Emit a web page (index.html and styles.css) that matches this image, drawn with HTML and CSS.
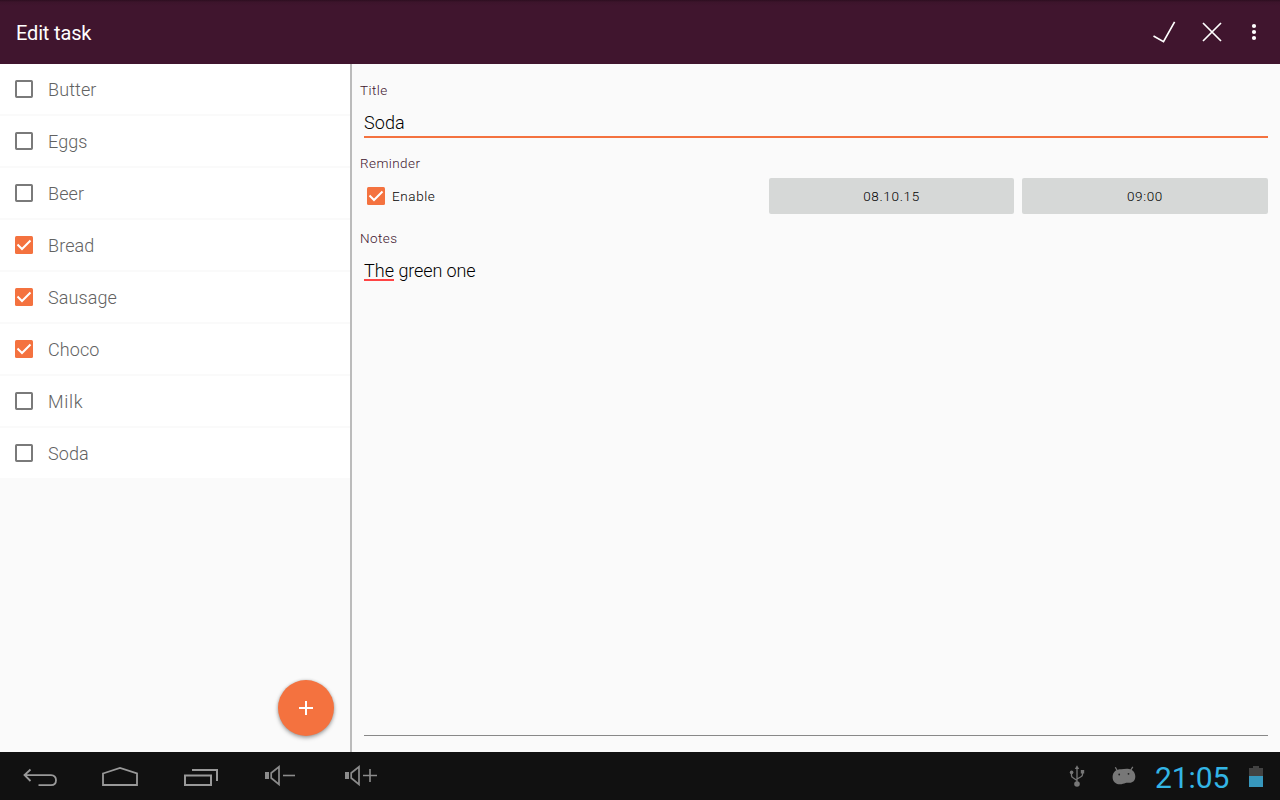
FILE: index.html
```html
<!DOCTYPE html>
<html lang="en">
<head>
<meta charset="utf-8">
<title>Edit task</title>
<link rel="stylesheet" href="styles.css">
</head>
<body>
<svg class="defs" aria-hidden="true">
  <symbol id="box-off" viewBox="0 0 20 20"><rect x="2" y="2" width="16" height="16" rx=".7" fill="none" stroke="#7a7a7a" stroke-width="2"/></symbol>
  <symbol id="box-on" viewBox="0 0 20 20"><rect x="1" y="1" width="18" height="18" rx="1.5" fill="#f4723f"/><path d="M3.5 9.5L8 14 16.5 5.5" fill="none" stroke="#fff" stroke-width="2"/></symbol>
</svg>
<div class="screen">
  <header class="bar">
    <h1 class="bar-title">Edit task</h1>
    <div class="actions">
      <svg class="act act-done" viewBox="0 0 24 24"><path d="M1.5 16L11.5 21.7 22.6 1.8" fill="none" stroke="#fff" stroke-width="1.7"/></svg>
      <svg class="act act-close" viewBox="0 0 24 24"><path d="M3 3L21 21M21 3L3 21" fill="none" stroke="#fff" stroke-width="1.7"/></svg>
      <svg class="act act-more" viewBox="0 0 24 24"><g fill="#fff"><circle cx="12" cy="6" r="2.1"/><circle cx="12" cy="12" r="2.1"/><circle cx="12" cy="18" r="2.1"/></g></svg>
    </div>
  </header>
  <main class="content">
    <section class="list">
      <ul class="tasks">
        <li class="task"><svg class="box"><use href="#box-off"/></svg><span>Butter</span></li>
        <li class="task"><svg class="box"><use href="#box-off"/></svg><span>Eggs</span></li>
        <li class="task"><svg class="box"><use href="#box-off"/></svg><span>Beer</span></li>
        <li class="task"><svg class="box"><use href="#box-on"/></svg><span>Bread</span></li>
        <li class="task"><svg class="box"><use href="#box-on"/></svg><span>Sausage</span></li>
        <li class="task"><svg class="box"><use href="#box-on"/></svg><span>Choco</span></li>
        <li class="task"><svg class="box"><use href="#box-off"/></svg><span class="wide">Milk</span></li>
        <li class="task"><svg class="box"><use href="#box-off"/></svg><span>Soda</span></li>
      </ul>
      <button class="fab" aria-label="Add"><svg class="fab-icon" viewBox="0 0 14 14"><path d="M7 0V14M0 7H14" stroke="#fff" stroke-width="2"/></svg></button>
    </section>
    <section class="form">
      <div class="label">Title</div>
      <div class="field title-field">Soda</div>
      <div class="label label-reminder">Reminder</div>
      <div class="reminder">
        <div class="enable"><svg class="box"><use href="#box-on"/></svg><span>Enable</span></div>
        <button class="pick pick-date">08.10.15</button>
        <button class="pick pick-time">09:00</button>
      </div>
      <div class="label label-notes">Notes</div>
      <div class="field notes-field"><span class="misspelt">The</span> green one</div>
    </section>
  </main>
  <footer class="system">
    <svg class="nav" viewBox="0 0 400 48" fill="none" stroke="#999" stroke-width="2">
      <path d="M30.5 17.5L24.5 23 30.5 29M24.5 23.2H51Q56 23.5 56 28.2T51 33.2H38.5" stroke-width="1.8"/>
      <path d="M103 21.5L120 16 137 21.5V33H103Z" stroke-width="1.8"/>
      <path d="M185 23.5H211V33H185ZM192 18H217V29"/>
      <g id="speaker"><path d="M271.2 21L279 14.8V32.5L271.2 26Z" stroke="#8c8c8c" stroke-width="1.7"/><path d="M265 20H269V27H265Z" fill="#8c8c8c" stroke="none"/></g>
      <path d="M283 23.5H295" stroke="#8c8c8c" stroke-width="1.6"/>
      <use href="#speaker" x="80"/>
      <path d="M363 23.5H377M370 17V30" stroke="#8c8c8c" stroke-width="1.6"/>
    </svg>
    <div class="status">
      <svg class="usb" viewBox="0 0 16 24" fill="none" stroke="#777" stroke-width="1.3">
        <path d="M8 20V4M2.5 9V11.5Q2.5 13 4 13.8L8 16.5M13.5 8V10.5Q13.5 12 12 12.8L8 15"/>
        <path d="M8 1.3L10.2 5H5.8Z" fill="#777" stroke="none"/><circle cx="8" cy="20" r="2.8" fill="#777" stroke="none"/><circle cx="2.6" cy="8.4" r="1.8" fill="#777" stroke="none"/><path d="M11.8 6H15.2V9.5H11.8Z" fill="#777" stroke="none"/>
      </svg>
      <svg class="droid" viewBox="0 0 24 20"><path d="M3.3 1.2L5.4 5M20.8 .8L18.5 4.5" stroke="#777" stroke-width="1.3"/><path d="M.6 11C.7 5.5 4.5 3.2 9 3.2C11 3.2 13 2.7 15.5 2.8C20 3 23.3 6 23.3 10.5C23.3 15 20.5 17 17 16.7C14.5 16.5 13.5 16.8 11 17.8C6.5 19.4 .5 17.5 .6 11Z" fill="#777"/><circle cx="7.2" cy="8.5" r=".9" fill="#222"/><circle cx="16.5" cy="7.8" r=".9" fill="#222"/></svg>
      <span class="clock">21:05</span>
      <svg class="battery" viewBox="0 0 14 22"><path d="M0 3H4V1H10V3H14V11H0Z" fill="#424242"/><path d="M0 11H14V22H0Z" fill="#3797bd"/></svg>
    </div>
  </footer>
</div>
</body>
</html>
```
FILE: styles.css
```css
* { box-sizing: border-box; }
body { margin: 0; font-family: Roboto, sans-serif; background: #fafafa; }
button { font-family: inherit; border: 0; padding: 0; }
.defs { position: absolute; width: 0; height: 0; }
.screen { width: 1280px; height: 800px; display: flex; flex-direction: column; overflow: hidden; }
.bar { height: 64px; flex: none; display: flex; align-items: center; justify-content: space-between; padding: 1px 14px 0 16px; background: linear-gradient(#2d0e20 0, #3c142b 2px, #40152e 6px, #40152e 100%); }
.bar-title { margin: 0; font-size: 20px; line-height: 24px; font-weight: 400; color: #fff; letter-spacing: -.15px; }
.actions { display: flex; align-items: center; margin-top: -1px; }
.act { width: 24px; height: 24px; }
.act-close { margin-left: 24px; }
.act-more { margin-left: 18px; }
.content { flex: 1; min-height: 0; display: flex; }
.list { width: 352px; position: relative; border-right: 2px solid #bbb; }
.tasks { list-style: none; margin: 0; padding: 0; display: flex; flex-direction: column; gap: 2px; }
.task { height: 50px; display: flex; align-items: center; gap: 14px; padding-left: 14px; background: #fff; font-size: 18px; font-weight: 300; color: #626262; line-height: 24px; letter-spacing: .1px; }
.task span { padding-top: 2px; }
.task .wide { letter-spacing: .7px; }
.box { width: 20px; height: 20px; flex: none; }
.fab { position: absolute; right: 16px; bottom: 16px; width: 56px; height: 56px; border-radius: 50%; background: #f4723f; box-shadow: 0 2px 4px rgba(0,0,0,.34), 0 0 3px rgba(0,0,0,.15); display: flex; align-items: center; justify-content: center; }
.fab-icon { width: 14px; height: 14px; }
.form { flex: 1; display: flex; flex-direction: column; padding: 16px 12px 16px 8px; }
.label { font-size: 13.5px; line-height: 20px; font-weight: 300; color: #40152e; letter-spacing: .42px; }
.field { margin-left: 4px; font-size: 18px; line-height: 24px; font-weight: 300; color: #000; }
.title-field { height: 38px; padding-top: 11px; border-bottom: 2px solid #f4723f; letter-spacing: .1px; }
.label-reminder { margin-top: 15px; }
.reminder { height: 36px; margin-top: 5px; display: flex; align-items: center; }
.enable { width: 409px; padding-left: 6px; display: flex; align-items: center; gap: 6px; font-size: 13.5px; color: #000; font-weight: 300; letter-spacing: .6px; }
.pick { height: 36px; border-radius: 2px; background: #d6d8d7; font-size: 13.5px; font-weight: 300; color: #000; letter-spacing: .65px; }
.pick-date { width: 245px; }
.pick-time { width: 246px; margin-left: 8px; }
.label-notes { margin-top: 14px; }
.notes-field { flex: 1; padding-top: 11px; border-bottom: 1px solid #888; letter-spacing: -.14px; }
.misspelt { display: inline-block; height: 22px; border-bottom: 2px solid #f44; letter-spacing: .1px; }
.system { height: 48px; flex: none; background: #111; display: flex; justify-content: space-between; }
.nav { width: 400px; height: 48px; }
.status { display: flex; align-items: center; padding-right: 17px; }
.usb { width: 16px; height: 24px; }
.droid { width: 24px; height: 20px; margin-left: 27px; }
.clock { width: 74px; margin-left: 19px; font-size: 30px; line-height: 36px; font-weight: 400; color: #33b5e5; margin-top: 3px; letter-spacing: -.1px; }
.battery { width: 14px; height: 22px; margin-left: 20px; margin-top: -1px; }
```
